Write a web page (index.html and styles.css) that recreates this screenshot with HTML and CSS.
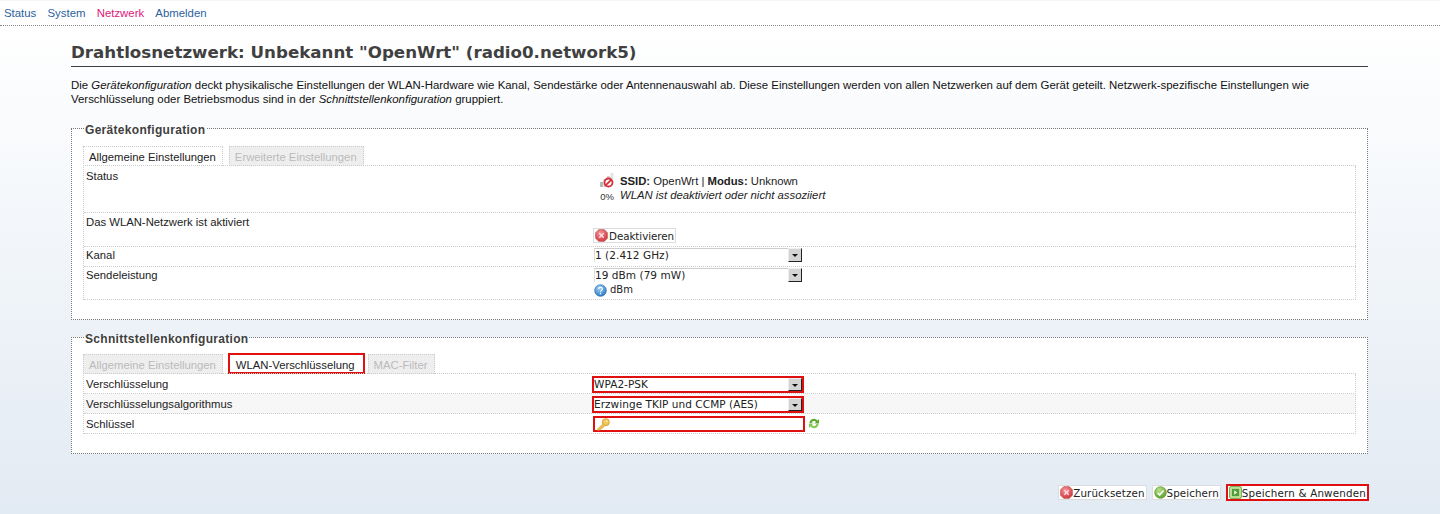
FILE: index.html
```html
<!DOCTYPE html>
<html lang="de">
<head>
<meta charset="utf-8">
<title>Drahtlosnetzwerk</title>
<link rel="stylesheet" href="styles.css">
</head>
<body>
<svg class="defs" width="0" height="0" aria-hidden="true">
  <defs>
    <radialGradient id="gr" cx="40%" cy="30%" r="75%"><stop offset="0" stop-color="#f59a9a"/><stop offset="1" stop-color="#d0343a"/></radialGradient>
    <radialGradient id="gg" cx="40%" cy="30%" r="75%"><stop offset="0" stop-color="#b9e08a"/><stop offset="1" stop-color="#5a9e2e"/></radialGradient>
    <radialGradient id="gb" cx="40%" cy="30%" r="75%"><stop offset="0" stop-color="#9fd0f5"/><stop offset="1" stop-color="#2a78c4"/></radialGradient>
    <symbol id="i-x" viewBox="0 0 14 14"><path d="M4 .7h6L13.300 4v6L10 13.300H4L.7 10V4z" fill="url(#gr)" stroke="#b84048" stroke-width=".7" stroke-linejoin="round"/><path d="M4.600 4.600l4.800 4.800M9.400 4.600l-4.800 4.800" stroke="#fde" stroke-width="1.500"/></symbol>
    <symbol id="i-ok" viewBox="0 0 14 14"><circle cx="7" cy="7" r="6.300" fill="url(#gg)" stroke="#5a9a30" stroke-width=".7"/><path d="M3.800 7.200l2.300 2.300 4.200-4.600" fill="none" stroke="#fff" stroke-width="1.600"/></symbol>
    <symbol id="i-apply" viewBox="0 0 14 14"><rect x=".7" y=".7" width="12.600" height="12.600" rx="1.500" fill="#cfe8a8" stroke="#5f9e35"/><rect x="3" y="3" width="8" height="8" fill="#4f9e3a"/><path d="M5.500 4.500l3.500 2.500-3.500 2.500z" fill="#e8f6cf"/></symbol>
  </defs>
</svg>
<nav class="topnav">
  <a href="#">Status</a>
  <a href="#">System</a>
  <a href="#" class="active">Netzwerk</a>
  <a href="#">Abmelden</a>
</nav>
<main class="content">
  <h2 class="title">Drahtlosnetzwerk: Unbekannt "OpenWrt" (radio0.network5)</h2>
  <p class="intro">Die <em>Gerätekonfiguration</em> deckt physikalische Einstellungen der WLAN-Hardware wie Kanal, Sendestärke oder Antennenauswahl ab. Diese Einstellungen werden von allen Netzwerken auf dem Gerät geteilt. Netzwerk-spezifische Einstellungen wie Verschlüsselung oder Betriebsmodus sind in der <em>Schnittstellenkonfiguration</em> gruppiert.</p>

  <fieldset class="section">
    <legend>Gerätekonfiguration</legend>
    <ul class="tabs">
      <li class="tab current">Allgemeine Einstellungen</li>
      <li class="tab">Erweiterte Einstellungen</li>
    </ul>
    <div class="rows">
      <div class="row h-status">
        <div class="label">Status</div>
        <div class="field status">
          <div class="signal">
            <svg width="16" height="16" viewBox="0 0 16 16"><path d="M1 9h3v5H1z" fill="#b8b8b8"/><path d="M4.500 6h3v8h-3z" fill="#c8c8c8"/><path d="M8 3h3v6H8z" fill="#d4d4d4"/><path d="M11.500 0h3v6h-3z" fill="#e4e4e4"/><circle cx="9.500" cy="9.500" r="4" fill="#fff" stroke="#d83038" stroke-width="1.800"/><path d="M6.800 12.200l5.400-5.400" stroke="#d83038" stroke-width="1.800"/></svg>
            <small>0%</small>
          </div>
          <div class="status-text"><b>SSID:</b> OpenWrt | <b>Modus:</b> Unknown<br><em>WLAN ist deaktiviert oder nicht assoziiert</em></div>
        </div>
      </div>
      <div class="row h-toggle">
        <div class="label">Das WLAN-Netzwerk ist aktiviert</div>
        <div class="field bottom"><button class="btn" type="button"><svg class="ico"><use href="#i-x"/></svg>Deaktivieren</button></div>
      </div>
      <div class="row h-select">
        <div class="label">Kanal</div>
        <div class="field"><span class="select"><select><option>1 (2.412 GHz)</option></select><i class="arrow"></i></span></div>
      </div>
      <div class="row h-power">
        <div class="label">Sendeleistung</div>
        <div class="field">
          <span class="select"><select><option>19 dBm (79 mW)</option></select><i class="arrow"></i></span>
          <div class="hint">
            <svg class="ico" viewBox="0 0 14 14"><circle cx="7" cy="7" r="6.300" fill="url(#gb)" stroke="#2a6fb0" stroke-width=".7"/><path d="M5 5.400c0-2.500 4-2.500 4 0 0 1.600-2 1.500-2 3M7 9.500v1.500" fill="none" stroke="#fff" stroke-width="1.300"/></svg>
            dBm
          </div>
        </div>
      </div>
    </div>
  </fieldset>

  <fieldset class="section second">
    <legend>Schnittstellenkonfiguration</legend>
    <ul class="tabs">
      <li class="tab">Allgemeine Einstellungen</li>
      <li class="tab current flagged">WLAN-Verschlüsselung</li>
      <li class="tab mac">MAC-Filter</li>
    </ul>
    <div class="rows">
      <div class="row h-select2">
        <div class="label">Verschlüsselung</div>
        <div class="field"><span class="select flagged"><select><option>WPA2-PSK</option></select><i class="arrow"></i></span></div>
      </div>
      <div class="row h-select2 alt">
        <div class="label">Verschlüsselungsalgorithmus</div>
        <div class="field"><span class="select flagged"><select><option>Erzwinge TKIP und CCMP (AES)</option></select><i class="arrow"></i></span></div>
      </div>
      <div class="row h-select2">
        <div class="label">Schlüssel</div>
        <div class="field keyline">
          <span class="keybox">
            <svg width="16" height="13" viewBox="0 0 16 14"><circle cx="11" cy="4.500" r="3.800" fill="#f0c860" stroke="#d0a030"/><circle cx="12" cy="3.500" r=".9" fill="#fff4c8"/><path d="M8.500 6L1.500 12.500l1.500 1.300 1.200-1 1 .2.500-1.500 1.300-.2L10.500 8z" fill="#eebd55" stroke="#d0a030" stroke-width=".6"/></svg>
            <input type="text" aria-label="Schlüssel">
          </span>
          <svg class="reload" width="12" height="13" viewBox="0 0 12 12"><path d="M1.500 5.500A4.500 4.500 0 0 1 9.500 3L11 1.500V6H6.500L8 4.500A2.500 2.500 0 0 0 3.600 5.500z" fill="#5cab2e"/><path d="M10.500 6.500A4.500 4.500 0 0 1 2.500 9L1 10.500V6h4.500L4 7.500a2.500 2.500 0 0 0 4.400-1z" fill="#86c85a"/></svg>
        </div>
      </div>
    </div>
  </fieldset>

  <div class="actions">
    <button class="btn" type="button"><svg class="ico"><use href="#i-x"/></svg>Zurücksetzen</button>
    <button class="btn" type="button"><svg class="ico"><use href="#i-ok"/></svg>Speichern</button>
    <button class="btn flagged" type="button"><svg class="ico"><use href="#i-apply"/></svg>Speichern &amp; Anwenden</button>
  </div>
</main>
</body>
</html>
```
FILE: styles.css
```css
* { box-sizing: border-box; }
html, body { height: 100%; }
body {
  margin: 0;
  height: 514px;
  overflow: hidden;
  font-family: "Liberation Sans", Arial, sans-serif;
  font-size: 11.300px;
  color: #222;
  background: linear-gradient(to bottom, #ffffff 0, #ffffff 25px, #e2eaf3 514px);
}
.defs { position: absolute; }
.topnav {
  height: 26px;
  padding: 6px 0 0 4px;
  display: flex;
  gap: 11.200px;
  background: #fff;
  border-top: 1px solid #f4f4f4;
  border-bottom: 1px dotted #888;
  font-size: 11.400px;
  line-height: 13px;
}
.topnav a { color: #2c5f9e; text-decoration: none; }
.topnav a.active { color: #e0187c; }
.content { padding: 0 72px 0 71px; }
.title {
  margin: 16px 0 0;
  height: 25px;
  font-family: "DejaVu Sans", sans-serif;
  font-size: 16.680px;
  line-height: 22px;
  font-weight: bold;
  color: #404040;
  border-bottom: 1px solid #404040;
  white-space: nowrap;
}
.intro { margin: 11px 0 0; font-size: 11.430px; line-height: 14px; color: #111; }
.section {
  margin: 12px 0 0;
  padding: 8px 11px 19px 11px;
  border: 1px dotted #777;
  background: #fff;
  min-width: 0;
}
.section.second { margin-top: 7px; padding-top: 7px; }
legend {
  margin-left: 2px;
  padding: 5px 1px 0 0;
  font-size: 12px;
  line-height: 15px;
  font-weight: bold;
  letter-spacing: .3px;
  color: #404040;
}
.tabs {
  list-style: none;
  display: flex;
  gap: 6px;
  margin: 0;
  padding: 0;
  height: 20px;
}
.tab {
  height: 20px;
  padding: 3px 6px 0 5px;
  line-height: 14px;
  border: 1px dotted #ccc;
  border-bottom: 0;
  background: #eee;
  color: #bbb;
}
.tab.current { background: #fff; color: #222; }
.tab.flagged { border: 2px solid #e01010; height: 21px; padding: 3px 8px 0 6px; margin: -1px 0 0 -1px; }
.tab.mac { margin-left: -3px; }
.rows {
  border: 1px dotted #ccc;
  border-width: 1px 0 0 1px;
  margin-top: -1px;
  position: relative;
}
.rows::after { content: ""; position: absolute; right: 0; top: 0; bottom: 0; border-right: 1px dotted #ccc; }
.row {
  display: grid;
  grid-template-columns: 508px 1fr;
  border-bottom: 1px dotted #ccc;
  padding-left: 2px;
}
.row.alt { background: #f7f7f7; }
.label { padding-top: 2px; line-height: 14px; color: #222; }
.h-status { height: 47px; }
.h-status .label { padding-top: 3px; }
.h-toggle { height: 34px; }
.h-select { height: 20px; }
.h-power { height: 33px; }
.h-select .label, .h-power .label { padding-top: 1px; }
.h-select2 { height: 20px; }
.h-select2 .label { padding-top: 3px; }
.field { padding-top: 1px; min-width: 0; font-family: "DejaVu Sans", sans-serif; font-size: 10px; }
.field.bottom { padding-top: 15px; margin-left: -1px; }
.field.bottom .btn { letter-spacing: -.05px; }
.field.bottom .ico { margin-right: 1px; }
.status { display: flex; padding-top: 8px; padding-left: 5px; font-family: "Liberation Sans", sans-serif; font-size: 11.300px; gap: 5px; }
.signal { width: 16px; display: flex; flex-direction: column; align-items: center; margin-top: -1px; }
.signal small { font-size: 9.500px; line-height: 11px; margin-top: 2px; color: #333; }
.status-text { line-height: 14px; }
.select {
  display: block;
  position: relative;
  width: 208px;
  height: 14px;
  background: #fff;
}
.select select {
  appearance: none;
  display: block;
  width: 100%;
  height: 14px;
  padding: 0;
  border: 0;
  border-top: 1px solid #ccc;
  border-left: 1px solid #ddd;
  background: #fff;
  font-family: "DejaVu Sans", sans-serif;
  font-size: 10.500px;
  line-height: 13px;
  color: #222;
  letter-spacing: .05px;
}
.arrow {
  position: absolute;
  right: 0;
  top: 0;
  width: 14px;
  height: 14px;
  background: #d4d4d4;
  border: 1px solid;
  border-color: #eee #222 #222 #eee;
}
.arrow::after {
  content: "";
  position: absolute;
  left: 3px;
  top: 5px;
  border-style: solid;
  border-width: 3px 3px 0;
  border-color: #111 transparent transparent;
}
.select.flagged { box-sizing: content-box; border: 2px solid #e01010; margin: 1px 0 0 -2px; width: 208px; height: 13px; }
.select.flagged select { height: 13px; border: 0; }
.select.flagged .arrow { height: 13px; }
.hint { display: flex; align-items: center; gap: 3px; margin-top: 1px; line-height: 14px; color: #222; }
.ico { width: 13px; height: 13px; flex: none; }
.btn {
  display: inline-flex;
  align-items: center;
  height: 15px;
  padding: 0 1px;
  background: #fff;
  border: 1px solid #ddd;
  font-family: "DejaVu Sans", sans-serif;
  font-size: 10.300px;
  color: #222;
  letter-spacing: .1px;
}
.keyline { display: flex; align-items: flex-start; gap: 3px; padding-top: 2px; }
.keybox {
  display: flex;
  align-items: center;
  width: 212px;
  height: 16px;
  margin-left: -1px;
  border: 2px solid #e01010;
  background: #fff;
}
.keybox input { flex: 1; min-width: 0; border: 0; padding: 0; height: 12px; background: transparent; }
.reload { margin-top: 1px; }
.actions {
  display: flex;
  justify-content: flex-end;
  align-items: center;
  gap: 5px;
  margin: 30px -1px 0 0;
}
.actions .btn.flagged { border: 2px solid #e01010; height: 17px; letter-spacing: .2px; }
```
